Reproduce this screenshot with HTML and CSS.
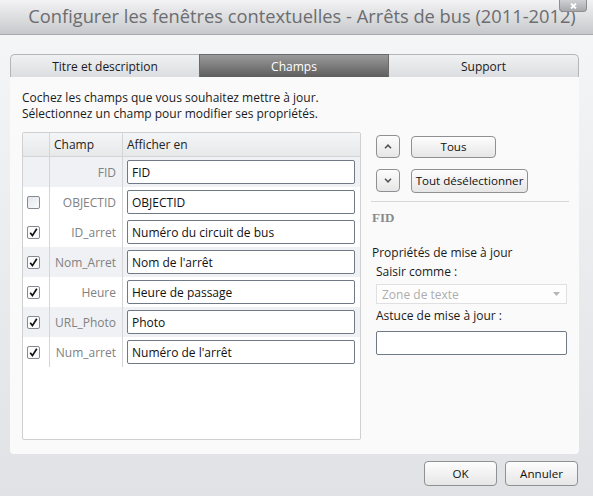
FILE: index.html
```html
<!DOCTYPE html>
<html lang="fr">
<head>
<meta charset="utf-8">
<title>Configurer les fenêtres contextuelles</title>
<link rel="stylesheet" href="styles.css">
</head>
<body>
<div class="dialog">
  <div class="titlebar">
    <div class="title">Configurer les fenêtres contextuelles - Arrêts de bus (2011-2012)</div>
    <div class="close"><svg viewBox="0 0 7 6" width="7" height="6"><path d="M1 0.5 L6 5.5 M6 0.5 L1 5.5" stroke="#fff" stroke-width="1.8"/></svg></div>
  </div>
  <div class="body">
    <div class="tabs">
      <div class="tab first">Titre et description</div>
      <div class="tab active">Champs</div>
      <div class="tab last">Support</div>
    </div>
    <div class="panel">
      <div class="left">
        <div class="intro">
          <div class="line">Cochez les champs que vous souhaitez mettre à jour.</div>
          <div class="line">Sélectionnez un champ pour modifier ses propriétés.</div>
        </div>
        <div class="table">
          <div class="row head">
            <div class="cell c1"></div>
            <div class="cell c2">Champ</div>
            <div class="cell c3">Afficher en</div>
          </div>
          <div class="row shade">
            <div class="cell c1"></div>
            <div class="cell c2 name">FID</div>
            <div class="cell c3"><div class="input">FID</div></div>
          </div>
          <div class="row">
            <div class="cell c1"><span class="cb"></span></div>
            <div class="cell c2 name">OBJECTID</div>
            <div class="cell c3"><div class="input">OBJECTID</div></div>
          </div>
          <div class="row">
            <div class="cell c1"><span class="cb on"><svg viewBox="0 0 13 13" width="13" height="13"><path d="M3.2 6.8 L5.4 9.6 L9.8 2.8" fill="none" stroke="#111" stroke-width="1.7"/></svg></span></div>
            <div class="cell c2 name">ID_arret</div>
            <div class="cell c3"><div class="input">Numéro du circuit de bus</div></div>
          </div>
          <div class="row shade">
            <div class="cell c1"><span class="cb on"><svg viewBox="0 0 13 13" width="13" height="13"><path d="M3.2 6.8 L5.4 9.6 L9.8 2.8" fill="none" stroke="#111" stroke-width="1.7"/></svg></span></div>
            <div class="cell c2 name">Nom_Arret</div>
            <div class="cell c3"><div class="input">Nom de l'arrêt</div></div>
          </div>
          <div class="row">
            <div class="cell c1"><span class="cb on"><svg viewBox="0 0 13 13" width="13" height="13"><path d="M3.2 6.8 L5.4 9.6 L9.8 2.8" fill="none" stroke="#111" stroke-width="1.7"/></svg></span></div>
            <div class="cell c2 name">Heure</div>
            <div class="cell c3"><div class="input">Heure de passage</div></div>
          </div>
          <div class="row shade">
            <div class="cell c1"><span class="cb on"><svg viewBox="0 0 13 13" width="13" height="13"><path d="M3.2 6.8 L5.4 9.6 L9.8 2.8" fill="none" stroke="#111" stroke-width="1.7"/></svg></span></div>
            <div class="cell c2 name">URL_Photo</div>
            <div class="cell c3"><div class="input">Photo</div></div>
          </div>
          <div class="row">
            <div class="cell c1"><span class="cb on"><svg viewBox="0 0 13 13" width="13" height="13"><path d="M3.2 6.8 L5.4 9.6 L9.8 2.8" fill="none" stroke="#111" stroke-width="1.7"/></svg></span></div>
            <div class="cell c2 name">Num_arret</div>
            <div class="cell c3"><div class="input">Numéro de l'arrêt</div></div>
          </div>
        </div>
      </div>
      <div class="right">
        <div class="btnrow">
          <div class="btn icon"><svg viewBox="0 0 8 5" width="8" height="5"><polyline points="1,4.2 4,1.2 7,4.2" fill="none" stroke="#555" stroke-width="1.6"/></svg></div>
          <div class="btn tous">Tous</div>
        </div>
        <div class="btnrow second">
          <div class="btn icon"><svg viewBox="0 0 8 5" width="8" height="5"><polyline points="1,0.8 4,3.8 7,0.8" fill="none" stroke="#555" stroke-width="1.6"/></svg></div>
          <div class="btn desel">Tout désélectionner</div>
        </div>
        <div class="sep"></div>
        <div class="fieldname">FID</div>
        <div class="props">Propriétés de mise à jour</div>
        <div class="label">Saisir comme :</div>
        <div class="select"><span>Zone de texte</span><svg viewBox="0 0 7 4" width="7" height="4"><polygon points="0,0 7,0 3.5,4" fill="#b5b5b5"/></svg></div>
        <div class="label astuce">Astuce de mise à jour :</div>
        <div class="input hint"></div>
      </div>
    </div>
  </div>
  <div class="footer">
    <div class="btn big">OK</div>
    <div class="btn big">Annuler</div>
  </div>
</div>
</body>
</html>
```
FILE: styles.css
```css
* { box-sizing: border-box; }
html, body { margin: 0; padding: 0; }
body {
  width: 593px;
  height: 496px;
  font-family: "Open Sans", "DejaVu Sans", sans-serif;
  font-size: 12px;
  color: #1a1a1a;
  overflow: hidden;
}
.dialog {
  width: 593px;
  height: 496px;
  display: flex;
  flex-direction: column;
  background: linear-gradient(#f6f7f8 0%, #eceef0 40%, #e0e2e5 100%);
}
.titlebar {
  position: relative;
  height: 35px;
  flex: none;
  background: linear-gradient(#f3f3f4, #d9dadc 60%, #c6c8cb);
  border-bottom: 1px solid #a6a8ac;
  display: flex;
  align-items: center;
  justify-content: center;
  padding-bottom: 4px;
}
.title {
  font-size: 18.3px;
  color: #6b6d70;
  padding-left: 11px;
  white-space: nowrap;
}
.close {
  position: absolute;
  top: 0;
  left: 559px;
  width: 28px;
  height: 12px;
  background: linear-gradient(#cfd0d3, #a7a9ad);
  border: 1px solid #8c8e92;
  border-top: none;
  border-radius: 0 0 4px 4px;
  display: flex;
  align-items: center;
  justify-content: center;
}
.close svg { display: block; }
.body {
  flex: 1;
  padding: 19px 14px 0 10px;
  display: flex;
  flex-direction: column;
}
.tabs {
  display: grid;
  grid-template-columns: 189px 190px 190px;
  height: 23px;
}
.tab {
  display: flex;
  align-items: center;
  justify-content: center;
  background: linear-gradient(#f0f1f2, #dcdde0);
  border: 1px solid #b4b6ba;
  border-bottom: none;
  font-size: 12px;
  color: #1a1a1a;
}
.tab.first { border-radius: 5px 0 0 0; border-right: none; }
.tab.last { border-radius: 0 5px 0 0; border-left: none; }
.tab.active {
  background: linear-gradient(#9a9a9a, #5e5e5e);
  border-color: #6a6a6a;
  color: #fff;
}
.panel {
  height: 377px;
  background: #fafafa;
  border-radius: 0 0 4px 4px;
  display: flex;
  padding: 13px 10px 0 12px;
}
.left { width: 339px; flex: none; }
.intro {
  margin: 0 0 10px 0;
  font-size: 12px;
  line-height: 16px;
  color: #1a1a1a;
}
.table {
  width: 339px;
  height: 308px;
  background: #fff;
  border: 1px solid #cfd0d2;
  border-radius: 2px;
}
.row {
  display: grid;
  grid-template-columns: 26px 73px 1fr;
  height: 30px;
}
.row.head {
  height: 24px;
  background: linear-gradient(#f4f5f6, #e7e8ea);
  border-bottom: 1px solid #d3d4d6;
  color: #222;
}
.row.shade { background: #eff1f4; }
.cell {
  display: flex;
  align-items: center;
}
.c1 { justify-content: flex-start; padding-left: 4px; }
.c2 { border-left: 1px solid #d4d5d7; padding-left: 4px; }
.c3 { border-left: 1px solid #d4d5d7; padding: 0 5px 0 4px; }
.head .c3 { padding-left: 4px; }
.name {
  justify-content: flex-end;
  padding-right: 6px;
  color: #818181;
}
.input {
  width: 100%;
  height: 24px;
  background: #fff;
  border: 1px solid #6f7a86;
  border-radius: 2px;
  display: flex;
  align-items: center;
  padding-left: 4px;
  color: #111;
}
.cb {
  width: 13px;
  height: 13px;
  border: 1px solid #858a92;
  border-radius: 2px;
  background: linear-gradient(135deg, #e3e6ea, #f9fafb);
  display: flex;
  align-items: center;
  justify-content: center;
  overflow: hidden;
}
.cb.on { background: #fbfbfb; }
.cb svg { display: block; margin: -1px; }
.right {
  flex: 1;
  margin-left: 10px;
  padding-top: 45px;
  display: flex;
  flex-direction: column;
}
.btnrow {
  display: flex;
  align-items: center;
  padding-left: 5px;
  gap: 11px;
  height: 23px;
}
.btnrow.second { margin-top: 11px; }
.btn {
  display: flex;
  align-items: center;
  justify-content: center;
  background: linear-gradient(#fdfdfd, #e6e6e7);
  border: 1px solid #8e9094;
  border-radius: 4px;
  font-size: 11.6px;
  color: #111;
}
.btn.icon { width: 24px; height: 23px; }
.btn.tous { width: 85px; height: 22px; }
.btn.desel { width: 117px; height: 24px; }
.sep {
  height: 1px;
  background: #d6d7d9;
  margin: 9px 0 0 0;
}
.fieldname {
  font-family: "Liberation Serif", "DejaVu Serif", serif;
  font-weight: bold;
  font-size: 13px;
  color: #8a8a8a;
  margin-top: 8px;
  line-height: 15px;
  padding-left: 1px;
}
.props {
  margin-top: 20px;
  line-height: 15px;
  padding-left: 1px;
}
.label {
  padding-left: 5px;
  margin-top: 4px;
  line-height: 15px;
}
.select {
  margin: 5px 2px 0 5px;
  height: 20px;
  border: 1px solid #e0e0e0;
  background: #fdfdfd;
  display: flex;
  align-items: center;
  justify-content: space-between;
  padding: 0 6px 0 5px;
  color: #adadad;
}
.label.astuce { margin-top: 4px; }
.input.hint {
  margin: 8px 2px 0 5px;
  width: auto;
  height: 24px;
}
.footer {
  height: 41px;
  flex: none;
  display: flex;
  justify-content: flex-end;
  align-items: flex-start;
  padding: 6px 15px 0 0;
  gap: 8px;
}
.btn.big {
  width: 73px;
  height: 25px;
  border-radius: 4px;
}
```
